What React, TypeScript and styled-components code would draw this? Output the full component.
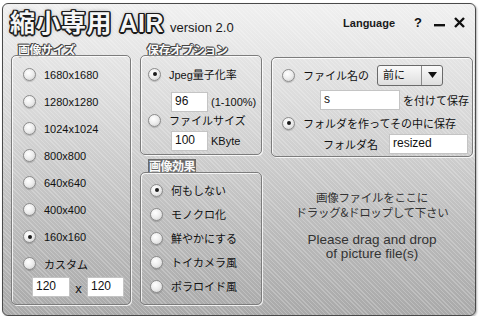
import styled, { createGlobalStyle } from "styled-components";

const GlobalStyle = createGlobalStyle`
  html, body {
    margin: 0;
    padding: 0;
    background: #ffffff;
  }
  body {
    font-family: "Liberation Sans", "Noto Sans CJK JP", sans-serif;
    color: #111;
  }
`;

const FONT = `"Liberation Sans", "Noto Sans CJK JP", sans-serif`;

const SIZES = ["1680x1680", "1280x1280", "1024x1024", "800x800", "640x640", "400x400", "160x160"];
const EFFECTS = ["何もしない", "モノクロ化", "鮮やかにする", "トイカメラ風", "ポラロイド風"];

const App = () => {
  return (
    <>
      <GlobalStyle />
      <Window>
        <TitleBar>
          <Brand>
            <Logo>縮小専用 AIR</Logo>
            <Version>version 2.0</Version>
          </Brand>
          <Controls>
            <MenuLink>Language</MenuLink>
            <HelpMark>?</HelpMark>
            <svg width="11" height="11" viewBox="0 0 11 11">
              <rect x="0" y="7" width="11" height="2.4" fill="#111" />
            </svg>
            <svg width="11" height="11" viewBox="0 0 11 11">
              <path d="M1 1 L10 10 M10 1 L1 10" stroke="#111" strokeWidth="2.4" />
            </svg>
          </Controls>
        </TitleBar>

        <Body>
          <Column>
            <GroupLabel>画像サイズ</GroupLabel>
            <GroupBox $grow>
              <SizeList>
                {SIZES.map((s) => (
                  <SizeRow key={s}>
                    <Radio $on={s === "160x160"} />
                    <span>{s}</span>
                  </SizeRow>
                ))}
                <SizeRow>
                  <Radio />
                  <span>カスタム</span>
                </SizeRow>
                <CustomRow>
                  <Field $w={38}>120</Field>
                  <Times>x</Times>
                  <Field $w={37}>120</Field>
                </CustomRow>
              </SizeList>
            </GroupBox>
          </Column>

          <Column>
            <GroupLabel>保存オプション</GroupLabel>
            <GroupBox>
              <SaveList>
                <OptRow $h={16}>
                  <Radio $on />
                  <span>Jpeg量子化率</span>
                </OptRow>
                <FieldRow $top={10}>
                  <Field $w={37}>96</Field>
                  <Unit>(1-100%)</Unit>
                </FieldRow>
                <OptRow $h={16}>
                  <Radio />
                  <span>ファイルサイズ</span>
                </OptRow>
                <FieldRow $top={3}>
                  <Field $w={37}>100</Field>
                  <Unit>KByte</Unit>
                </FieldRow>
              </SaveList>
            </GroupBox>
            <GroupLabel $dark>画像効果</GroupLabel>
            <GroupBox $grow>
              <EffectList>
                {EFFECTS.map((e, i) => (
                  <EffectRow key={e}>
                    <Radio $on={i === 0} />
                    <span>{e}</span>
                  </EffectRow>
                ))}
              </EffectList>
            </GroupBox>
          </Column>

          <Column>
            <OutputBox>
              <OptRow $h={22}>
                <Radio />
                <span>ファイル名の</span>
                <Select>
                  <SelectValue>前に</SelectValue>
                  <SelectArrow>
                    <svg width="9" height="6" viewBox="0 0 9 6">
                      <path d="M0 0 H9 L4.5 6 Z" fill="#111" />
                    </svg>
                  </SelectArrow>
                </Select>
              </OptRow>
              <FieldRow $top={4} $indent={38}>
                <Field $w={80}>s</Field>
                <Unit>を付けて保存</Unit>
              </FieldRow>
              <OptRow $h={20} $top={3}>
                <Radio $on />
                <span>フォルダを作ってその中に保存</span>
              </OptRow>
              <FieldRow $top={1} $indent={41}>
                <Unit $gap={0}>フォルダ名</Unit>
                <Field $w={79} $left={11}>resized</Field>
              </FieldRow>
            </OutputBox>
            <DropZone>
              <DropJa>画像ファイルをここに</DropJa>
              <DropJa>ドラッグ&amp;ドロップして下さい</DropJa>
              <DropEn $top={13}>Please drag and drop</DropEn>
              <DropEn>of picture file(s)</DropEn>
            </DropZone>
          </Column>
        </Body>
      </Window>
    </>
  );
};

export default App;

const Window = styled.div`
  box-sizing: border-box;
  margin: 3px 0 0 2px;
  width: 474px;
  height: 313px;
  border: 1px solid #4a4a4a;
  border-radius: 6px;
  box-shadow: 1px 1px 2px rgba(0, 0, 0, 0.3);
  background:
    repeating-linear-gradient(45deg, rgba(255, 255, 255, 0.22) 0 1px, rgba(255, 255, 255, 0) 1px 3px),
    linear-gradient(180deg, #f0f0f0 0%, #dcdcdc 30%, #bdbdbd 70%, #a9a9a9 100%);
  display: flex;
  flex-direction: column;
  overflow: hidden;
  font-family: ${FONT};
`;

const TitleBar = styled.div`
  height: 39px;
  flex: none;
  display: flex;
  justify-content: space-between;
  align-items: flex-start;
  padding: 3px 10px 0 7px;
  box-sizing: border-box;
`;

const Brand = styled.div`
  display: flex;
  align-items: baseline;
  gap: 6px;
`;

const Logo = styled.div`
  font-family: "Liberation Sans", "Noto Sans CJK JP", sans-serif;
  font-weight: 700;
  font-size: 25px;
  line-height: 32px;
  letter-spacing: 0.5px;
  color: #f6f6f6;
  text-shadow:
    1.5px 0 0 #1b1b1b, -1.5px 0 0 #1b1b1b, 0 1.5px 0 #1b1b1b, 0 -1.5px 0 #1b1b1b,
    1.2px 1.2px 0 #1b1b1b, -1.2px 1.2px 0 #1b1b1b, 1.2px -1.2px 0 #1b1b1b, -1.2px -1.2px 0 #1b1b1b,
    0 0 4px #777;
`;

const Version = styled.div`
  font-size: 13px;
  color: #1a1a1a;
`;

const Controls = styled.div`
  display: flex;
  align-items: center;
  gap: 9px;
  margin-top: 8px;
`;

const MenuLink = styled.span`
  font-size: 11px;
  font-weight: 700;
  color: #1a1a1a;
  margin-right: 10px;
`;

const HelpMark = styled.span`
  font-size: 13px;
  font-weight: 700;
  color: #111;
  margin-right: 3px;
`;

const Body = styled.div`
  flex: 1;
  display: grid;
  grid-template-columns: 120px 122px 202px;
  column-gap: 9px;
  padding: 0 0 10px 8px;
  min-height: 0;
`;

const Column = styled.div`
  display: flex;
  flex-direction: column;
  min-height: 0;
`;

const GroupLabel = styled.div<{ $dark?: boolean }>`
  align-self: flex-start;
  margin-left: ${(p) => (p.$dark ? "8px" : "7px")};
  margin-top: ${(p) => (p.$dark ? "4px" : "0")};
  height: 12px;
  line-height: 13px;
  font-family: "Noto Sans CJK JP", sans-serif;
  font-weight: 700;
  font-size: 12px;
  letter-spacing: -0.5px;
  color: #fafafa;
  padding: ${(p) => (p.$dark ? "0 1px 1px" : "0")};
  background: ${(p) => (p.$dark ? "#6a6a6a" : "transparent")};
  text-shadow: ${(p) =>
    p.$dark
      ? "none"
      : "1px 0 0 #444, -1px 0 0 #444, 0 1px 0 #444, 0 -1px 0 #444, 1px 1px 0 #444, -1px -1px 0 #444"};
`;

const GroupBox = styled.div<{ $grow?: boolean }>`
  box-sizing: border-box;
  border: 1px solid #7c7c7c;
  border-radius: 5px;
  box-shadow: inset 1px 1px 0 rgba(255, 255, 255, 0.8), 1px 1px 0 rgba(255, 255, 255, 0.8);
  flex: ${(p) => (p.$grow ? "1" : "none")};
  min-height: 0;
`;

const OutputBox = styled(GroupBox)`
  margin-top: 14px;
  height: 100px;
  padding: 6px 0 0 10px;
`;

const SizeList = styled.div`
  display: flex;
  flex-direction: column;
  padding: 5px 0 0 11px;
`;

const SizeRow = styled.div`
  height: 27px;
  display: flex;
  align-items: center;
  gap: 8px;
  font-size: 11px;
`;

const CustomRow = styled.div`
  display: flex;
  align-items: center;
  margin: 0 0 0 9px;
`;

const Times = styled.span`
  width: 17px;
  text-align: center;
  font-size: 13px;
  padding-top: 3px;
`;

const SaveList = styled.div`
  display: flex;
  flex-direction: column;
  padding: 10px 0 3px 7px;
`;

const EffectList = styled.div`
  display: flex;
  flex-direction: column;
  padding: 5px 0 0 9px;
`;

const EffectRow = styled.div`
  height: 24px;
  display: flex;
  align-items: center;
  gap: 8px;
  font-size: 11px;
`;

const OptRow = styled.div<{ $h: number; $top?: number }>`
  height: ${(p) => p.$h}px;
  margin-top: ${(p) => p.$top ?? 0}px;
  display: flex;
  align-items: center;
  gap: 8px;
  font-size: 11px;
  white-space: nowrap;
`;

const FieldRow = styled.div<{ $top: number; $indent?: number }>`
  display: flex;
  align-items: center;
  margin-top: ${(p) => p.$top}px;
  padding-left: ${(p) => p.$indent ?? 23}px;
`;

const Field = styled.div<{ $w: number; $left?: number }>`
  box-sizing: border-box;
  width: ${(p) => p.$w}px;
  height: 20px;
  margin-left: ${(p) => p.$left ?? 0}px;
  background: #ffffff;
  border: 1px solid #c4c4c4;
  padding: 1px 0 0 3px;
  font-size: 12px;
  line-height: 14px;
  color: #111;
`;

const Unit = styled.span<{ $gap?: number }>`
  margin-left: ${(p) => p.$gap ?? 3}px;
  font-size: 11px;
  white-space: nowrap;
`;

const Radio = styled.span<{ $on?: boolean }>`
  box-sizing: border-box;
  flex: none;
  width: 13px;
  height: 13px;
  border-radius: 50%;
  border: 1px solid #8c8c8c;
  background: radial-gradient(circle at 40% 35%, #ffffff 0%, #ececec 50%, #c9c9c9 100%);
  box-shadow: 0 1px 1px rgba(0, 0, 0, 0.18);
  display: grid;
  place-items: center;

  &::after {
    content: "";
    width: 4px;
    height: 4px;
    border-radius: 50%;
    background: #1a1a1a;
    display: ${(p) => (p.$on ? "block" : "none")};
  }
`;

const Select = styled.div`
  box-sizing: border-box;
  display: flex;
  width: 66px;
  height: 21px;
  margin-left: 0;
  border: 1px solid #6a6a6a;
  border-radius: 3px;
  background: linear-gradient(180deg, #fafafa, #dedede);
`;

const SelectValue = styled.span`
  flex: 1;
  padding-left: 5px;
  font-size: 11px;
  line-height: 19px;
  border-right: 1px solid #8a8a8a;
`;

const SelectArrow = styled.span`
  width: 20px;
  display: grid;
  place-items: center;
`;

const DropZone = styled.div`
  flex: 1;
  display: flex;
  flex-direction: column;
  align-items: center;
  justify-content: center;
  padding-bottom: 12px;
  color: #333;
`;

const DropJa = styled.div`
  font-family: "Noto Sans CJK JP", sans-serif;
  font-size: 11.5px;
  line-height: 15px;
  letter-spacing: -0.3px;
`;

const DropEn = styled.div<{ $top?: number }>`
  margin-top: ${(p) => p.$top ?? 0}px;
  font-family: "Liberation Sans", sans-serif;
  font-size: 13.5px;
  line-height: 14px;
  color: #333;
`;
